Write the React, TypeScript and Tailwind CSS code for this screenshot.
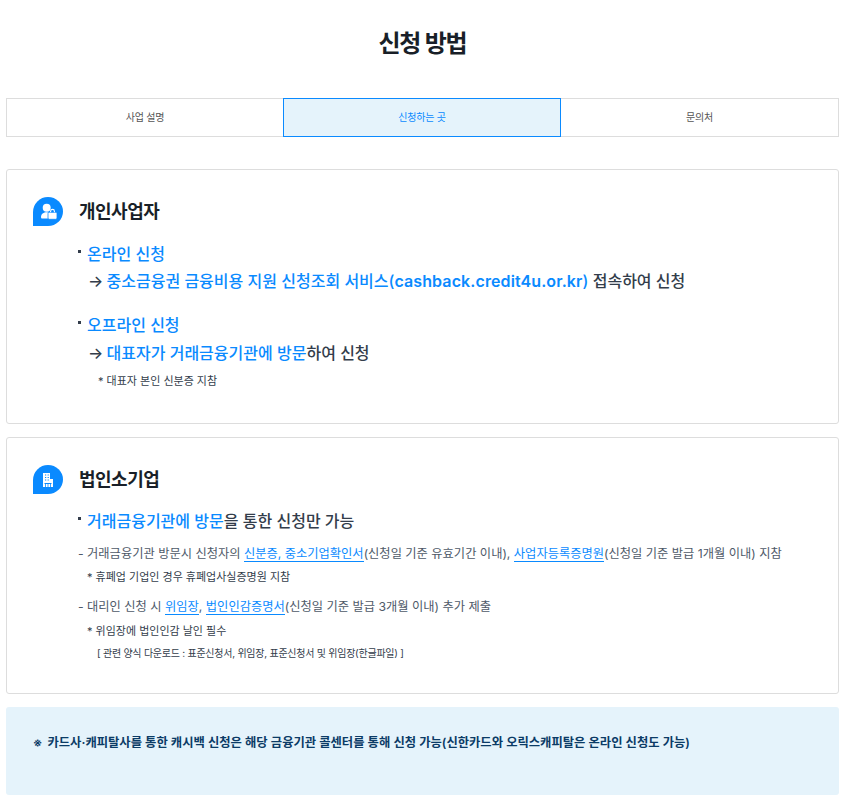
const font = { fontFamily: 'Inter, "Noto Sans CJK KR", sans-serif' };

function PersonIcon() {
  return (
    <svg width="30" height="29" viewBox="0 0 30 29" className="shrink-0">
      <path d="M15 0a15 14.5 0 0 1 0 29H0V15A15 15 0 0 1 15 0Z" fill="#0a8aff" />
      <circle cx="13.7" cy="10.8" r="4" fill="#fff" />
      <path d="M8 20c0-3.2 2.6-4.8 5.8-4.8 1 0 2.2.2 3.2.6V21.5H9c-.6 0-1-.6-1-1.5Z" fill="#fff" />
      <rect x="15" y="15.3" width="9" height="7" rx="1.2" fill="#fff" stroke="#0a8aff" strokeWidth="0.8" />
      <path d="M17.6 15.3v-1a1.9 1.9 0 0 1 3.8 0v1" fill="none" stroke="#fff" strokeWidth="1.1" />
    </svg>
  );
}

function BuildingIcon() {
  return (
    <svg width="30" height="29" viewBox="0 0 30 29" className="shrink-0">
      <path d="M15 0a15 14.5 0 0 1 0 29H0V15A15 15 0 0 1 15 0Z" fill="#0a8aff" />
      <path d="M10 8h7v6h3v8H10Z" fill="#fff" />
      <path d="M12 10h1.2M14.6 10h1.2M12 12.5h1.2M14.6 12.5h1.2M12 15h1.2M14.6 15h1.2" stroke="#0a8aff" strokeWidth="1.1" />
      <path d="M11.5 18.5h7" stroke="#0a8aff" strokeWidth="1" />
      <path d="M12.5 19v3M15 19v3M17.5 19v3" stroke="#0a8aff" strokeWidth="0.8" />
    </svg>
  );
}

function Dot() {
  return <span className="absolute left-[-9px] top-[8px] h-[3px] w-[3px] bg-[#333d4b]" />;
}

function Link({ children }: { children: React.ReactNode }) {
  return <span className="border-b border-[#0a8aff] text-[#0a8aff]">{children}</span>;
}

export default function App() {
  return (
    <div style={font} className="w-[844px] bg-white pr-[5px] pb-[7px] pl-[6px] text-[#333d4b]">
      <h1 className="pt-[26px] pb-[37px] text-center text-[24px] leading-[35px] font-bold tracking-[-1.2px] text-[#191f28]">
        신청 방법
      </h1>

      <div className="flex h-[39px] text-[10px] tracking-[-0.2px] text-[#555]">
        <div className="flex w-[277px] items-center justify-center border border-r-0 border-[#dddddd]">사업 설명</div>
        <div className="flex w-[278px] items-center justify-center border border-[#0a8aff] bg-[#e5f3fb] text-[#0a8aff]">신청하는 곳</div>
        <div className="flex flex-1 items-center justify-center border border-l-0 border-[#dddddd]">문의처</div>
      </div>

      <section className="mt-[32px] h-[255px] rounded-[3px] border border-[#dddddd] pt-[27px] pl-[26px]">
        <div className="flex items-center gap-[16px]">
          <PersonIcon />
          <h2 className="text-[18px] leading-[29px] font-bold tracking-[-0.5px] text-[#191f28]">개인사업자</h2>
        </div>
        <div className="pl-[54px]">
          <p className="relative mt-[16px] text-[16px] leading-[24px] font-medium text-[#0a8aff]"><Dot />온라인 신청</p>
          <p className="mt-[3px] pl-[1px] text-[16px] leading-[24px] font-medium whitespace-nowrap">
            → <span className="ml-[-1px] text-[#0a8aff]">중소금융권 금융비용 지원 신청조회 서비스(<span className="font-semibold tracking-[0.1px]">cashback.credit4u.or.kr</span>)</span> 접속하여 신청
          </p>
          <p className="relative mt-[20px] text-[16px] leading-[24px] font-medium text-[#0a8aff]"><Dot />오프라인 신청</p>
          <p className="mt-[4px] pl-[1px] text-[16px] leading-[24px] font-medium">
            → <span className="ml-[-1px] text-[#0a8aff]">대표자가 거래금융기관에 방문</span>하여 신청
          </p>
          <p className="mt-[8px] pl-[11px] text-[11px] leading-[16px]">* 대표자 본인 신분증 지참</p>
        </div>
      </section>

      <section className="mt-[13px] h-[257px] rounded-[3px] border border-[#dddddd] pt-[27px] pl-[26px]">
        <div className="flex items-center gap-[16px]">
          <BuildingIcon />
          <h2 className="text-[18px] leading-[29px] font-bold tracking-[-0.5px] text-[#191f28]">법인소기업</h2>
        </div>
        <div className="pl-[45px]">
          <p className="relative mt-[15px] ml-[9px] text-[16px] leading-[24px] font-medium">
            <Dot /><span className="text-[#0a8aff]">거래금융기관에 방문</span>을 통한 신청만 가능
          </p>
          <p className="mt-[12px] text-[12.25px] leading-[18px] whitespace-nowrap text-[#4e5968]">
            - 거래금융기관 방문시 신청자의 <Link>신분증, 중소기업확인서</Link>(신청일 기준 유효기간 이내), <Link>사업자등록증명원</Link>(신청일 기준 발급 1개월 이내) 지참
          </p>
          <p className="mt-[6px] pl-[9px] text-[11px] leading-[16px] text-[#333d4b]">* 휴폐업 기업인 경우 휴폐업사실증명원 지참</p>
          <p className="mt-[13px] text-[12.25px] leading-[18px] text-[#4e5968]">
            - 대리인 신청 시 <Link>위임장</Link>, <Link>법인인감증명서</Link>(신청일 기준 발급 3개월 이내) 추가 제출
          </p>
          <p className="mt-[7px] pl-[9px] text-[11px] leading-[16px] text-[#333d4b]">* 위임장에 법인인감 날인 필수</p>
          <p className="mt-[6px] pl-[19px] text-[10px] leading-[16px] tracking-[-0.25px] text-[#333d4b]">[ 관련 양식 다운로드 : 표준신청서, 위임장, 표준신청서 및 위임장(한글파일) ]</p>
        </div>
      </section>

      <div className="mt-[13px] h-[88px] rounded-[3px] bg-[#e5f3fb] pt-[27px] pl-[27px] text-[12.32px] leading-[18px] font-semibold whitespace-nowrap text-[#0b3b66]">
        <span className="mr-[-1px]">※</span> &nbsp;카드사·캐피탈사를 통한 캐시백 신청은 해당 금융기관 콜센터를 통해 신청 가능(신한카드와 오릭스캐피탈은 온라인 신청도 가능)
      </div>
    </div>
  );
}
